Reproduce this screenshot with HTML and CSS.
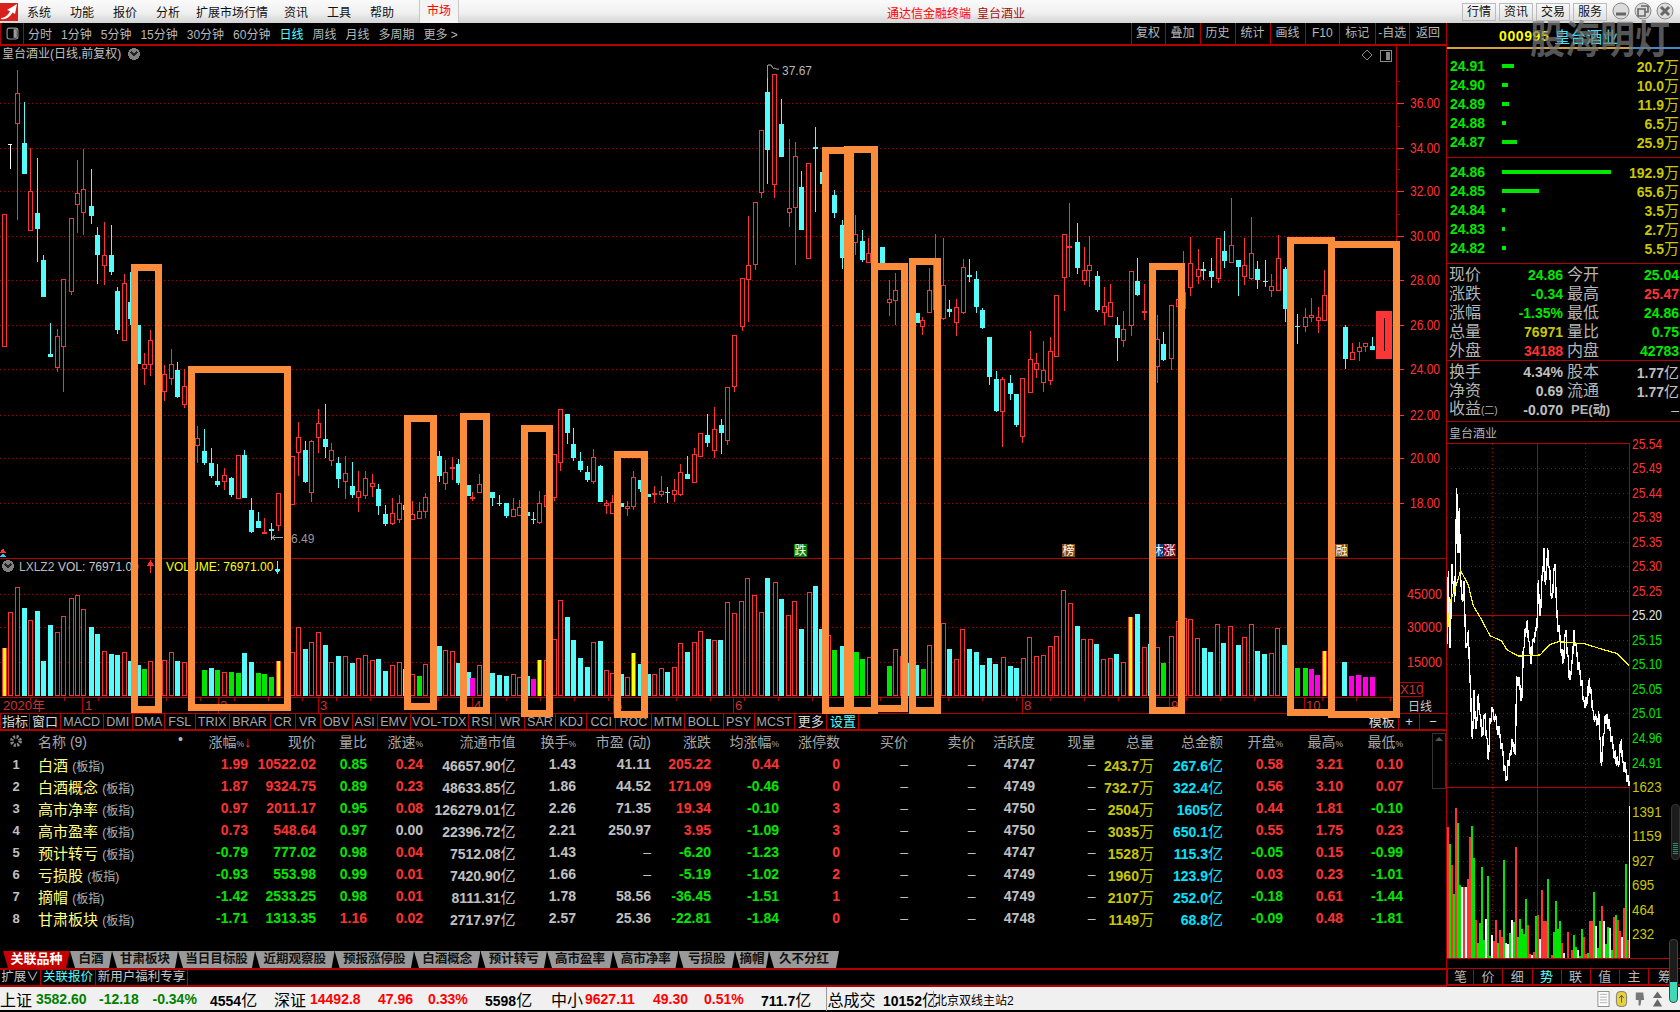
FILE: index.html
```html
<!DOCTYPE html>
<html lang="zh-CN">
<head>
<meta charset="utf-8">
<title>通达信金融终端</title>
<link rel="stylesheet" href="styles.css">
</head>
<body>
<div class="app">
  <header class="menu">
    <svg class="logo" viewBox="0 0 18 18"><rect width="18" height="18" fill="#d8201c"/><path d="M1 15 C5 15 8 12 10 8 L7 7 L17 1 L15 11 L12.5 9.5 C10 14 6 17 1 16Z" fill="#fff"/></svg>
    <nav class="menu-items"><span>系统</span><span>功能</span><span>报价</span><span>分析</span><span class="wide">扩展市场行情</span><span>资讯</span><span>工具</span><span>帮助</span></nav>
    <span class="market">市场</span>
    <div class="app-title"><span class="t1">通达信金融终端</span><span class="t2">皇台酒业</span></div>
    <div class="top-btns"><span>行情</span><span>资讯</span><span>交易</span><span>服务</span></div>
    <div class="win-btns">
      <svg viewBox="0 0 18 18"><circle cx="9" cy="9" r="8"/><path d="M4 12h10" stroke-width="3"/></svg>
      <svg viewBox="0 0 18 18"><circle cx="9" cy="9" r="8"/><path d="M7 4h7v6h-3M4 7h7v7H4z" stroke-width="1.6"/></svg>
      <svg viewBox="0 0 18 18"><circle cx="9" cy="9" r="8"/><path d="M5 5l8 8M13 5l-8 8" stroke-width="3"/></svg>
    </div>
  </header>

  <div class="work">
    <section class="left">
      <div class="toolbar">
        <div class="tool-toggle"><svg viewBox="0 0 12 12"><rect x="1" y="1" width="10" height="10" rx="2"/><rect x="7" y="2" width="3" height="8" class="fill"/></svg></div>
        <div class="periods"><span>分时</span><span>1分钟</span><span>5分钟</span><span>15分钟</span><span>30分钟</span><span>60分钟</span><span class="on">日线</span><span>周线</span><span>月线</span><span>多周期</span><span>更多 &gt;</span></div>
        <div class="tools"><span>复权</span><span>叠加</span><span>历史</span><span>统计</span><span>画线</span><span>F10</span><span>标记</span><span>-自选</span><span>返回</span></div>
      </div>

      <svg id="kline" class="kline" viewBox="0 46 1446 667" width="1446" height="667"></svg>

      <div class="ind-tabs">
        <span class="hi">指标</span><span class="hi">窗口</span><span>MACD</span><span>DMI</span><span>DMA</span><span>FSL</span><span>TRIX</span><span>BRAR</span><span>CR</span><span>VR</span><span>OBV</span><span>ASI</span><span>EMV</span><span>VOL-TDX</span><span>RSI</span><span>WR</span><span>SAR</span><span>KDJ</span><span>CCI</span><span>ROC</span><span>MTM</span><span>BOLL</span><span>PSY</span><span>MCST</span><span class="hi">更多</span><span class="act">设置</span><i></i><span class="hi">模板</span><span class="hi">+</span><span class="hi">−</span>
      </div>

      <div class="sheet">
        <div class="row head">
          <span class="c"><svg class="gear" viewBox="0 0 14 14"><circle cx="7" cy="7" r="4.2"/></svg></span><span class="l">名称 (9)<b class="dot">•</b></span><span>涨幅<em>%</em><b class="sort">↓</b></span><span>现价</span><span>量比</span><span>涨速<em>%</em></span><span>流通市值</span><span>换手<em>%</em></span><span>市盈 (动)</span><span>涨跌</span><span>均涨幅<em>%</em></span><span>涨停数</span><span>买价</span><span>卖价</span><span>活跃度</span><span>现量</span><span>总量</span><span>总金额</span><span>开盘<em>%</em></span><span>最高<em>%</em></span><span>最低<em>%</em></span>
        </div>
        <div class="row">
          <span class="c">1</span><span class="l nm">白酒 <small>(板指)</small></span><span class="r">1.99</span><span class="r">10522.02</span><span class="g">0.85</span><span class="r">0.24</span><span>46657.90<u>亿</u></span><span>1.43</span><span>41.11</span><span class="r">205.22</span><span class="r">0.44</span><span class="r">0</span><span class="n">–</span><span class="n">–</span><span>4747</span><span class="n">–</span><span class="y">243.7<u>万</u></span><span class="b">267.6<u>亿</u></span><span class="r">0.58</span><span class="r">3.21</span><span class="r">0.10</span>
        </div>
        <div class="row">
          <span class="c">2</span><span class="l nm">白酒概念 <small>(板指)</small></span><span class="r">1.87</span><span class="r">9324.75</span><span class="g">0.89</span><span class="r">0.23</span><span>48633.85<u>亿</u></span><span>1.86</span><span>44.52</span><span class="r">171.09</span><span class="g">-0.46</span><span class="r">0</span><span class="n">–</span><span class="n">–</span><span>4749</span><span class="n">–</span><span class="y">732.7<u>万</u></span><span class="b">322.4<u>亿</u></span><span class="r">0.56</span><span class="r">3.10</span><span class="r">0.07</span>
        </div>
        <div class="row">
          <span class="c">3</span><span class="l nm">高市净率 <small>(板指)</small></span><span class="r">0.97</span><span class="r">2011.17</span><span class="g">0.95</span><span class="r">0.08</span><span>126279.01<u>亿</u></span><span>2.26</span><span>71.35</span><span class="r">19.34</span><span class="g">-0.10</span><span class="r">3</span><span class="n">–</span><span class="n">–</span><span>4750</span><span class="n">–</span><span class="y">2504<u>万</u></span><span class="b">1605<u>亿</u></span><span class="r">0.44</span><span class="r">1.81</span><span class="g">-0.10</span>
        </div>
        <div class="row">
          <span class="c">4</span><span class="l nm">高市盈率 <small>(板指)</small></span><span class="r">0.73</span><span class="r">548.64</span><span class="g">0.97</span><span>0.00</span><span>22396.72<u>亿</u></span><span>2.21</span><span>250.97</span><span class="r">3.95</span><span class="g">-1.09</span><span class="r">3</span><span class="n">–</span><span class="n">–</span><span>4750</span><span class="n">–</span><span class="y">3035<u>万</u></span><span class="b">650.1<u>亿</u></span><span class="r">0.55</span><span class="r">1.75</span><span class="r">0.23</span>
        </div>
        <div class="row">
          <span class="c">5</span><span class="l nm">预计转亏 <small>(板指)</small></span><span class="g">-0.79</span><span class="g">777.02</span><span class="g">0.98</span><span class="r">0.04</span><span>7512.08<u>亿</u></span><span>1.43</span><span class="n">–</span><span class="g">-6.20</span><span class="g">-1.23</span><span class="r">0</span><span class="n">–</span><span class="n">–</span><span>4747</span><span class="n">–</span><span class="y">1528<u>万</u></span><span class="b">115.3<u>亿</u></span><span class="g">-0.05</span><span class="r">0.15</span><span class="g">-0.99</span>
        </div>
        <div class="row">
          <span class="c">6</span><span class="l nm">亏损股 <small>(板指)</small></span><span class="g">-0.93</span><span class="g">553.98</span><span class="g">0.99</span><span class="r">0.01</span><span>7420.90<u>亿</u></span><span>1.66</span><span class="n">–</span><span class="g">-5.19</span><span class="g">-1.02</span><span class="r">2</span><span class="n">–</span><span class="n">–</span><span>4749</span><span class="n">–</span><span class="y">1960<u>万</u></span><span class="b">123.9<u>亿</u></span><span class="r">0.03</span><span class="r">0.23</span><span class="g">-1.01</span>
        </div>
        <div class="row">
          <span class="c">7</span><span class="l nm">摘帽 <small>(板指)</small></span><span class="g">-1.42</span><span class="g">2533.25</span><span class="g">0.98</span><span class="r">0.01</span><span>8111.31<u>亿</u></span><span>1.78</span><span>58.56</span><span class="g">-36.45</span><span class="g">-1.51</span><span class="r">1</span><span class="n">–</span><span class="n">–</span><span>4749</span><span class="n">–</span><span class="y">2107<u>万</u></span><span class="b">252.0<u>亿</u></span><span class="g">-0.18</span><span class="r">0.61</span><span class="g">-1.44</span>
        </div>
        <div class="row">
          <span class="c">8</span><span class="l nm">甘肃板块 <small>(板指)</small></span><span class="g">-1.71</span><span class="g">1313.35</span><span class="r">1.16</span><span class="r">0.02</span><span>2717.97<u>亿</u></span><span>2.57</span><span>25.36</span><span class="g">-22.81</span><span class="g">-1.84</span><span class="r">0</span><span class="n">–</span><span class="n">–</span><span>4748</span><span class="n">–</span><span class="y">1149<u>万</u></span><span class="b">68.8<u>亿</u></span><span class="g">-0.09</span><span class="r">0.48</span><span class="g">-1.81</span>
        </div>
        <div class="sheet-scroll"><b></b></div>
      </div>

      <div class="sheet-tabs">
        <span class="act">关联品种</span><span>白酒</span><span>甘肃板块</span><span>当日目标股</span><span>近期观察股</span><span>预报涨停股</span><span>白酒概念</span><span>预计转亏</span><span>高市盈率</span><span>高市净率</span><span>亏损股</span><span>摘帽</span><span>久不分红</span>
      </div>
      <div class="sub-tabs"><span>扩展∨</span><span class="on">关联报价</span><span>新用户福利专享</span></div>
    </section>

    <aside class="panel">
      <div class="p-head"><span class="code">000995</span><span class="pname">皇台酒业</span></div>
      <div class="book sell">
        <div class="lv"><b>24.91</b><i><em style="width:12px"></em></i><span>20.7<u>万</u></span></div>
        <div class="lv"><b>24.90</b><i><em style="width:6px"></em></i><span>10.0<u>万</u></span></div>
        <div class="lv"><b>24.89</b><i><em style="width:7px"></em></i><span>11.9<u>万</u></span></div>
        <div class="lv"><b>24.88</b><i><em style="width:4px"></em></i><span>6.5<u>万</u></span></div>
        <div class="lv"><b>24.87</b><i><em style="width:15px"></em></i><span>25.9<u>万</u></span></div>
      </div>
      <div class="book buy">
        <div class="lv"><b>24.86</b><i><em style="width:109px"></em></i><span>192.9<u>万</u></span></div>
        <div class="lv"><b>24.85</b><i><em style="width:37px"></em></i><span>65.6<u>万</u></span></div>
        <div class="lv"><b>24.84</b><i><em style="width:3px"></em></i><span>3.5<u>万</u></span></div>
        <div class="lv"><b>24.83</b><i><em style="width:3px"></em></i><span>2.7<u>万</u></span></div>
        <div class="lv"><b>24.82</b><i><em style="width:4px"></em></i><span>5.5<u>万</u></span></div>
      </div>
      <div class="quote">
        <div class="qr"><label>现价</label><b class="g">24.86</b><label>今开</label><b class="g">25.04</b></div>
        <div class="qr"><label>涨跌</label><b class="g">-0.34</b><label>最高</label><b class="r">25.47</b></div>
        <div class="qr"><label>涨幅</label><b class="g">-1.35%</b><label>最低</label><b class="g">24.86</b></div>
        <div class="qr"><label>总量</label><b class="y">76971</b><label>量比</label><b class="g">0.75</b></div>
        <div class="qr"><label>外盘</label><b class="r">34188</b><label>内盘</label><b class="g">42783</b></div>
      </div>
      <div class="quote extra">
        <div class="qr"><label>换手</label><b>4.34%</b><label>股本</label><b>1.77<u>亿</u></b></div>
        <div class="qr"><label>净资</label><b>0.69</b><label>流通</label><b>1.77<u>亿</u></b></div>
        <div class="qr"><label class="wide">收益<small>(二)</small></label><b>-0.070</b><label class="pe">PE(动)</label><b class="dash">–</b></div>
      </div>
      <div class="p-title">皇台酒业</div>
      <svg id="fs" class="fs" viewBox="1447 443 233 525" width="233" height="525"></svg>
      <div class="r-tabs"><span>笔</span><span>价</span><span>细</span><span class="on">势</span><span>联</span><span>值</span><span>主</span><span>筹</span></div>
    </aside>
  </div>

  <footer class="status">
    <span>上证</span><b class="dg">3582.60</b><b class="dg">-12.18</b><b class="dg">-0.34%</b><b class="k">4554<u>亿</u></b>
    <span>深证</span><b class="rd">14492.8</b><b class="rd">47.96</b><b class="rd">0.33%</b><b class="k">5598<u>亿</u></b>
    <span>中小</span><b class="rd">9627.11</b><b class="rd">49.30</b><b class="rd">0.51%</b><b class="k">711.7<u>亿</u></b>
    <span class="sep">总成交</span><b class="k">10152<u>亿</u></b><span class="srv">北京双线主站2</span>
    <div class="st-icons">
      <svg viewBox="0 0 14 18"><rect x="1" y="1" width="12" height="16" fill="#fff" stroke="#888"/><path d="M3 4h8M3 7h8M3 10h8M3 13h8" stroke="#aaa"/></svg>
      <svg viewBox="0 0 14 18"><rect x="1.500" y="1" width="11" height="16" rx="4" fill="#e6d23c" stroke="#777"/><path d="M7 5v8M4.500 8L7 5l2.500 3" stroke="#555" fill="none"/></svg>
      <svg viewBox="0 0 14 18"><path d="M3 2h8l1 8H9l-1 6H6V10H3z" fill="#777"/></svg>
      <svg viewBox="0 0 14 18"><path d="M7 1l5 7H2zM7 9l5 8H2z" fill="#666"/></svg>
    </div>
  </footer>

  <div class="marks" aria-hidden="true">
    <svg id="boxes" class="boxes" viewBox="0 0 1680 1012" width="1680" height="1012"></svg>
    <div class="watermark">股海明灯</div>
    <div class="dock dock-a"><i></i></div>
    <div class="dock dock-b"><i></i></div>
  </div>
</div>
<script src="chart.js"></script>
</body>
</html>
```
FILE: styles.css
```css
* { box-sizing: border-box; margin: 0; padding: 0; }
html, body { width: 1680px; height: 1012px; background: #000; overflow: hidden; }
body { font-family: "Liberation Sans", "Noto Sans CJK SC", sans-serif; font-size: 12px; color: #c0c0c0; }
i, em, u { font-style: normal; text-decoration: none; }
.app { position: relative; width: 1680px; height: 1012px; display: flex; flex-direction: column; padding-bottom: 2px; }

/* title bar */
.menu { height: 23px; flex: none; display: flex; align-items: center; position: relative; background: linear-gradient(#fafafa, #f0f0f0 55%, #d4d4d4); color: #111; font-size: 12px; }
.logo { width: 18px; height: 18px; flex: none; }
.menu-items { display: flex; gap: 19px; margin-left: 9px; }
.menu-items .wide { margin: 0 -3px; }
.market { margin-left: 25px; width: 40px; height: 23px; line-height: 22px; text-align: center; color: #f00; border: solid #c8c8c8; border-width: 0 1px; background: #f4f4f4; }
.app-title { position: absolute; left: 887px; top: 4px; display: flex; gap: 6px; }
.t1 { color: #f00; } .t2 { color: #a01010; }
.top-btns { position: absolute; left: 1462px; top: 3px; display: flex; gap: 3px; }
.top-btns span { width: 34px; height: 18px; line-height: 16px; text-align: center; border: 1px solid #bbb; background: linear-gradient(#f8f8f8, #e0e0e0); }
.win-btns { position: absolute; left: 1612px; top: 2px; display: flex; gap: 4px; }
.win-btns svg { width: 18px; height: 18px; }
.win-btns circle { fill: #dcdcdc; stroke: #888; }
.win-btns path { stroke: #666; fill: none; }

/* work area */
.work { flex: 1; min-height: 0; display: grid; grid-template-columns: 1446px 234px; }
.left { display: flex; flex-direction: column; min-width: 0; }

.toolbar { height: 23px; flex: none; display: flex; align-items: center; border-bottom: 2px solid #b40000; }
.tool-toggle { width: 24px; height: 21px; flex: none; display: flex; align-items: center; justify-content: center; border-left: 1px solid #b40000; border-right: 1px solid #b40000; }
.tool-toggle svg { width: 13px; height: 13px; }
.tool-toggle rect { fill: none; stroke: #9a9a9a; }
.tool-toggle rect.fill { fill: #9a9a9a; stroke: none; }
.periods { display: flex; gap: 9px; margin-left: 4px; color: #b8b8b8; white-space: nowrap; }
.periods .on { color: #5ff; }
.tools { margin-left: auto; display: grid; grid-template-columns: 34px 35px 35px 35px 35px 34.500px 35.500px 34.500px 37px; height: 21px; }
.tools span { border-left: 1px solid #b40000; text-align: center; line-height: 20px; color: #b8b8b8; white-space: nowrap; }

.kline { display: block; flex: none; shape-rendering: crispEdges; }
.kline text, .fs text { font-family: "Liberation Sans", "Noto Sans CJK SC", sans-serif; }

.ind-tabs { height: 18px; flex: none; display: grid; grid-template-columns: 30px 31px 42.500px 29.500px 32px 30.500px 34px 41px 25.500px 24.500px 32.200px 25px 33px 58px 27.700px 28.600px 31px 31.500px 28.500px 36px 33px 38.600px 31.100px 40.300px 32.400px 32.100px 505.500px 34.400px 20.600px 26px; border-top: 1px solid #b40000; border-bottom: 2px solid #b40000; font-size: 12.500px; color: #a8a8a8; }
.ind-tabs span { border-right: 1px solid #b40000; text-align: center; line-height: 16px; white-space: nowrap; overflow: hidden; }
.ind-tabs .hi { color: #d8d8d8; font-size: 13px; }
.ind-tabs .act { color: #5ff; font-size: 13px; }
.ind-tabs > span:first-child { border-left: 1px solid #b40000; }
.ind-tabs > span:last-child { border-right: 0; }

/* quotes table */
.sheet { position: relative; height: 220px; flex: none; }
.row { display: grid; grid-template-columns: 32px 158px 58px 68px 51px 56px 92.600px 60.400px 75px 60px 68px 61px 68px 67.600px 59.400px 60.500px 58.500px 69px 60px 60px 60px; height: 22px; align-items: center; font-size: 14px; font-weight: 700; color: #c0c0c0; white-space: nowrap; }
.row > span { text-align: right; }
.row.head { height: 20px; margin-bottom: 2px; font-weight: 400; font-size: 14px; color: #a8a8a8; }
.head em { font-size: 8.500px; }
.row > .c { text-align: center; font-size: 13px; }
.row > .l { text-align: left; padding-left: 6px; position: relative; }
.head .l { font-size: 14px; }
.dot { position: absolute; left: 146px; top: 0; font-weight: 400; color: #bbb; }
.sort { display: inline-block; width: 4px; font-size: 15px; line-height: 14px; color: #f33; font-weight: 400; overflow: visible; }
.gear { width: 14px; height: 14px; vertical-align: -2px; }
.gear circle { fill: none; stroke: #888; stroke-width: 3.500; stroke-dasharray: 2 1.300; }
.row .nm { font-size: 15px; font-weight: 400; color: #ffff80; }
.row small { font-size: 12px; color: #b0b0b0; }
.row u { font-weight: 400; font-size: 15px; }
.r { color: #ff3232; } .g { color: #00e800; } .y { color: #c8c800; } .b { color: #00e4ff; }
.row > .n { font-weight: 400; color: #c0c0c0; }
.sheet-scroll { position: absolute; left: 1432px; top: 2px; width: 14px; height: 56px; border: 1px solid #333; }
.sheet-scroll b { display: block; margin: 3px auto 0; width: 0; height: 0; border: 4px solid transparent; border-top: 0; border-bottom-color: #555; }

.sheet-tabs { height: 17px; flex: none; display: grid; grid-template-columns: 3px 67px 42px 66px 77px 79.600px 79.400px 66.500px 66.500px 66px 65.500px 56.500px 34px 70px; grid-auto-flow: column; align-items: stretch; font-size: 12.500px; font-weight: 700; color: #111; white-space: nowrap; }
.sheet-tabs::before { content: ""; }
.sheet-tabs span { background: #999; text-align: center; line-height: 16px; clip-path: polygon(0 0, 100% 0, calc(100% - 3px) 100%, 5px 100%); }
.sheet-tabs .act { background: #c40000; color: #fff; font-size: 13px; clip-path: polygon(0 0, 100% 0, calc(100% - 4px) 100%, 5px 100%); }

.sub-tabs { height: 19px; flex: none; display: grid; grid-template-columns: 41px 55px 92px 1fr; border-top: 2px solid #b40000; border-bottom: 2px solid #b40000; font-size: 12.500px; color: #c8c8c8; }
.sub-tabs span { border-right: 1px solid #b40000; text-align: center; line-height: 15px; white-space: nowrap; overflow: hidden; }
.sub-tabs .on { color: #5ff; }

/* right panel */
.panel { border-left: 1px solid #b40000; display: flex; flex-direction: column; min-width: 0; height: 964px; }
.p-head { height: 26px; flex: none; padding: 2px 0 0 52px; display: flex; gap: 5px; align-items: center; font-size: 16px; border-bottom: 2px solid; border-image: linear-gradient(90deg, #d4a23c 0 79%, #3c8ccc 79% 100%) 1; }
.code { color: #ff0; font-weight: 700; font-size: 14px; letter-spacing: .6px; }
.pname { color: #3fe6ff; }
.book { flex: none; border-bottom: 1px solid #b40000; }
.sell { height: 109px; padding-top: 6px; }
.buy { height: 106px; padding-top: 3px; }
.lv { height: 19px; display: grid; grid-template-columns: 52px 1fr auto; align-items: center; padding: 0 1px 0 3px; }
.lv b { font-size: 14px; color: #00e800; }
.lv i { display: block; }
.lv em { display: block; height: 4px; background: #00e800; }
.lv span { font-size: 14px; font-weight: 700; color: #c8c800; white-space: nowrap; }
.lv u, .qr u { font-size: 15px; font-weight: 400; }
.quote { flex: none; height: 97px; padding-top: 1px; border-bottom: 1px solid #b40000; }
.quote.extra { height: 61px; padding-top: 0; }
.qr { height: 19px; display: grid; grid-template-columns: 36px 78px 40px 1fr; align-items: center; padding: 0 1px 0 2px; white-space: nowrap; }
.qr label { font-size: 16px; color: #b4b4b4; line-height: 19px; }
.qr label:nth-of-type(2) { padding-left: 4px; }
.qr b { text-align: right; font-size: 14px; color: #c0c0c0; }
.qr b.g { color: #00e800; } .qr b.r { color: #ff3232; } .qr b.y { color: #c8c800; }
.qr .wide small { font-size: 10px; }
.qr .pe { font-size: 13px; font-weight: 700; padding-left: 0; margin-left: 4px; }
.qr .dash { font-weight: 400; }
.p-title { height: 21px; flex: none; font-size: 12px; line-height: 24px; padding-left: 2px; color: #b4b4b4; }
.fs { display: block; flex: none; overflow: visible; shape-rendering: crispEdges; }
.r-tabs { height: 18px; flex: none; display: grid; grid-template-columns: 26px 29px 29.500px 29px 29px 29.500px 29px 1fr; border-top: 1px solid #b40000; border-bottom: 2px solid #b40000; font-size: 13px; color: #b8b8b8; }
.r-tabs span { border-left: 1px solid #b40000; text-align: center; line-height: 15px; }
.r-tabs .on { color: #5ff; }

/* status bar */
.status { height: 23px; flex: none; display: grid; grid-template-columns: 36px 63px 53.500px 57.500px 64px 36px 68px 50px 57px 66px 34px 68px 51px 57px 64.500px 57.500px 55px 100px 1fr; align-items: center; background: #f0f0f0; color: #000; font-size: 16px; white-space: nowrap; }
.status b { font-size: 14px; }
.status u { font-size: 16px; font-weight: 400; }
.dg { color: #008000; } .rd { color: #f00; } .k { color: #000; }
.sep { border-left: 1px solid #999; padding-left: 1px; }
.srv { font-size: 12px; border-left: 1px solid #999; padding-left: 1px; margin-left: -5px; }
.st-icons { display: flex; justify-content: flex-end; gap: 5px; padding-right: 16px; }
.st-icons svg { width: 13px; height: 18px; }

/* things lying over the screen */
.marks { position: absolute; inset: 0; pointer-events: none; }
.boxes { position: absolute; left: 0; top: 0; shape-rendering: crispEdges; }
.boxes rect { fill: none; stroke: #fa8c3c; stroke-width: 7; }
.watermark { position: absolute; left: 1530px; top: 15px; font: 700 35px/42px "Noto Sans CJK SC", sans-serif; color: rgba(120, 120, 120, .72); transform: scaleY(1.1); }
.dock { position: absolute; background: #1c1c1c; border-radius: 4px; }
.dock-a { left: 1671px; top: 804px; width: 9px; height: 56px; border: 1px solid #333; }
.dock-a i { position: absolute; left: 1px; right: 1px; bottom: 4px; height: 12px; background: repeating-linear-gradient(#2a8a70 0 1px, #1c1c1c 1px 2px); }
.dock-b { left: 1669px; top: 939px; width: 9px; height: 64px; border: 1px solid #444; border-radius: 4px 4px 5px 5px; overflow: hidden; }
.dock-b i { position: absolute; left: 0; right: 0; bottom: 0; height: 20px; background: #3fd8b8; }
```
FILE: chart.js
```javascript
(function () {
  var NS = 'http://www.w3.org/2000/svg';
  var RED = '#ff3232', CY = '#54fcfc', GRN = '#00e600', DARK = '#a80000', LINE = '#b40000';

  function el(parent, tag, attrs, text) {
    var n = document.createElementNS(NS, tag);
    for (var k in attrs) n.setAttribute(k, attrs[k]);
    if (text != null) n.textContent = text;
    parent.appendChild(n);
    return n;
  }
  function rect(p, x, y, w, h, fill, stroke) {
    return el(p, 'rect', { x: x, y: y, width: w, height: h, fill: fill || 'none', stroke: stroke || 'none' });
  }
  function line(p, x1, y1, x2, y2, c, dash) {
    var a = { x1: x1, y1: y1, x2: x2, y2: y2, stroke: c };
    if (dash) a['stroke-dasharray'] = dash;
    return el(p, 'line', a);
  }
  function label(p, x, y, s, fill, size, len) {
    var a = { x: x, y: y, fill: fill, 'font-size': size };
    if (len) { a.textLength = len; a.lengthAdjust = 'spacingAndGlyphs'; }
    return el(p, 'text', a, s);
  }

  /* daily candles, as [x, high, top, bottom, low, kind] in crop units */
  var A = [[8,493,493,892,892,'r'],[37,60,130,223,510,'r'],[53,155,280,372,372,'c'],[68,293,424,542,542,'r'],[82,325,490,537,635,'c'],[97,615,630,740,740,'c'],[113,820,912,920,920,'c'],[128,838,858,953,965,'r'],[142,688,688,892,1025,'r'],[158,503,503,725,735,'r'],[173,330,430,464,548,'r'],[187,297,418,490,555,'r'],[203,357,468,498,522,'c'],[218,531,555,615,702,'c'],[232,517,616,647,705,'r'],[248,525,615,666,675,'c'],[263,712,723,840,852,'c'],[278,672,700,872,872,'r'],[292,665,755,808,825,'c'],[310,825,825,942,942,'c'],[323,908,943,958,1005,'r'],[337,840,871,944,978,'r'],[368,945,973,1027,1053,'r'],[384,897,943,988,1005,'r'],[397,937,960,1042,1045,'c'],[413,958,1008,1065,1075,'r'],[442,1128,1165,1187,1240,'r'],[458,1137,1203,1240,1245,'c'],[473,1194,1240,1278,1283,'c'],[487,1243,1293,1305,1310,'c'],[502,1255,1276,1295,1320,'r'],[518,1280,1284,1335,1340,'c'],[534,1216,1216,1346,1346,'r'],[547,1200,1215,1343,1343,'c'],[563,1343,1380,1445,1450,'c'],[578,1385,1413,1433,1435,'c'],[592,1403,1446,1450,1450,'s'],[608,1418,1438,1443,1470,'c'],[623,1330,1330,1427,1442,'r'],[640,1343,1343,1360,1360,'r'],[654,1218,1218,1366,1366,'r'],[668,1117,1162,1210,1278,'r'],[684,1172,1200,1296,1298,'c'],[697,1170,1172,1328,1355,'r'],[713,1078,1120,1163,1210,'r'],[729,1062,1167,1190,1225,'c'],[742,1180,1200,1232,1248,'r'],[758,1220,1240,1286,1315,'c'],[773,1218,1270,1295,1347,'r'],[789,1236,1308,1335,1344,'c'],[803,1263,1323,1343,1385,'r'],[818,1263,1285,1337,1346,'r'],[834,1272,1298,1310,1340,'r'],[847,1302,1318,1367,1395,'c'],[863,1365,1392,1422,1428,'c'],[878,1345,1390,1421,1425,'r'],[893,1335,1360,1411,1420,'r'],[908,1350,1365,1380,1395,'c'],[923,1353,1393,1409,1409,'r'],[938,1355,1384,1406,1406,'r'],[953,1330,1340,1385,1405,'r'],[984,1203,1218,1277,1295,'c'],[997,1230,1267,1301,1320,'r'],[1012,1222,1252,1258,1290,'r'],[1027,1228,1242,1298,1305,'c'],[1048,1305,1305,1337,1337,'c'],[1058,1327,1340,1345,1352,'r'],[1073,1272,1303,1330,1330,'r'],[1103,1326,1326,1343,1368,'c'],[1118,1335,1360,1362,1367,'c'],[1134,1358,1358,1398,1404,'c'],[1150,1345,1378,1400,1400,'r'],[1163,1350,1372,1397,1397,'r'],[1180,1385,1385,1397,1397,'c'],[1195,1385,1407,1409,1423,'c'],[1208,1323,1360,1418,1423,'r'],[1224,1335,1335,1372,1372,'r'],[1240,1213,1213,1345,1352,'r'],[1255,1078,1078,1238,1262,'r'],[1269,1092,1092,1148,1182,'c'],[1284,1133,1183,1225,1232,'c'],[1300,1207,1233,1260,1265,'c'],[1314,1247,1266,1290,1295,'c'],[1329,1197,1222,1297,1302,'r'],[1345,1245,1248,1355,1355,'c'],[1358,1350,1360,1367,1392,'r'],[1372,1335,1357,1392,1392,'r'],[1392,1358,1358,1370,1370,'c'],[1405,1353,1367,1378,1397,'r'],[1419,1264,1282,1372,1380,'r'],[1434,1290,1290,1318,1326,'c'],[1452,1332,1332,1340,1340,'c'],[1464,1308,1330,1335,1360,'s'],[1480,1278,1322,1336,1342,'r'],[1495,1312,1327,1329,1358,'c'],[1510,1288,1321,1336,1356,'r'],[1524,1243,1267,1336,1338,'r'],[1540,1218,1272,1286,1288,'c'],[1555,1194,1213,1300,1300,'r'],[1567,1150,1150,1222,1222,'r']];
  var B = [[15,1092,1155,1178,1190,'c'],[30,1072,1138,1202,1225,'r'],[43,1108,1125,1148,1212,'c'],[57,1010,1010,1174,1185,'r'],[72,855,855,1012,1025,'r'],[87,685,685,830,843,'r'],[100,498,646,690,815,'r'],[114,455,455,646,660,'r'],[128,240,240,430,443,'r'],[141,80,126,300,402,'c'],[155,72,72,406,443,'r'],[170,147,222,320,320,'c'],[185,267,475,490,530,'r'],[198,276,319,475,645,'r'],[212,363,411,540,540,'c'],[226,340,340,626,626,'r'],[240,232,291,297,487,'c'],[254,290,366,402,450,'c'],[281,420,435,488,503,'c'],[296,510,526,623,656,'c'],[324,495,553,580,615,'r'],[338,540,573,630,637,'c'],[352,565,610,638,640,'r'],[380,590,590,640,640,'c'],[395,690,748,758,798,'r'],[408,668,721,754,826,'r'],[425,710,710,750,795,'c'],[453,788,788,818,818,'c'],[465,800,811,832,855,'r'],[478,655,721,790,790,'r'],[492,552,640,780,780,'r'],[507,565,706,808,810,'r'],[521,750,778,785,800,'c'],[534,746,772,818,858,'r'],[549,628,652,790,793,'r'],[563,628,676,681,695,'c'],[576,663,688,770,790,'c'],[590,773,780,834,838,'c'],[605,862,862,980,1005,'c'],[618,962,987,1082,1085,'c'],[632,980,988,1087,1190,'r'],[647,975,999,1032,1050,'c'],[661,1032,1032,1125,1130,'c'],[674,985,985,1160,1178,'r'],[689,843,928,1028,1028,'r'],[703,908,940,960,985,'r'],[716,872,960,1000,1026,'r'],[731,862,902,992,1005,'r'],[745,736,736,922,922,'r'],[760,553,553,683,783,'r'],[772,460,588,593,680,'s'],[787,520,576,653,672,'c'],[802,590,660,692,705,'r'],[814,558,644,662,710,'r'],[829,663,678,780,785,'c'],[844,710,767,790,825,'r'],[856,702,755,800,800,'r'],[871,802,825,864,932,'c'],[885,783,838,872,890,'r'],[900,663,663,827,858,'r'],[913,625,693,736,738,'c'],[927,702,782,790,810,'r'],[945,795,795,850,850,'c'],[956,795,868,952,1000,'r'],[968,847,882,930,933,'c'],[984,766,766,926,960,'r'],[998,726,746,770,780,'r'],[1010,603,725,778,778,'r'],[1025,562,640,715,737,'r'],[1040,598,658,680,702,'r'],[1052,636,657,662,690,'c'],[1067,625,663,680,713,'c'],[1082,565,565,686,698,'r'],[1095,543,604,632,654,'c'],[1109,445,586,638,640,'r'],[1124,630,630,650,738,'c'],[1138,565,646,680,705,'r'],[1151,501,610,688,690,'r'],[1165,632,658,690,718,'c'],[1180,630,693,696,710,'c'],[1193,672,708,722,740,'r'],[1208,555,625,722,722,'r'],[1222,650,658,776,816,'c'],[1248,792,828,830,882,'c'],[1264,773,802,830,845,'r'],[1278,743,796,805,815,'r'],[1291,772,802,812,848,'r'],[1305,660,736,812,812,'r'],[1348,825,831,926,958,'c'],[1362,880,907,930,930,'r'],[1377,875,892,907,932,'r'],[1389,880,880,892,905,'r'],[1404,860,888,900,900,'c']];

  /* volume bars, as [x, top, kind] in crop units */
  var VA = [[8,324,'y'],[23,217,'r'],[37,142,'r'],[53,204,'c'],[68,241,'r'],[82,213,'c'],[97,363,'c'],[113,255,'c'],[128,277,'r'],[142,229,'r'],[158,175,'r'],[173,166,'r'],[187,208,'r'],[203,261,'c'],[218,282,'c'],[232,334,'r'],[248,343,'c'],[263,345,'c'],[278,337,'r'],[292,363,'c'],[310,375,'c'],[323,387,'g'],[337,364,'r'],[368,361,'r'],[384,337,'r'],[397,363,'c'],[413,365,'r'],[428,365,'r'],[458,390,'g'],[473,384,'c'],[487,390,'g'],[502,395,'r'],[518,396,'g'],[534,399,'g'],[547,339,'c'],[563,366,'c'],[578,399,'g'],[592,402,'g'],[608,411,'g'],[623,363,'y'],[640,337,'r'],[654,337,'r'],[668,262,'r'],[684,327,'c'],[697,307,'r'],[713,277,'r'],[729,315,'c'],[742,366,'r'],[758,348,'c'],[773,348,'r'],[789,369,'c'],[803,355,'r'],[818,346,'r'],[834,361,'r'],[847,357,'c'],[863,393,'c'],[878,376,'r'],[893,366,'r'],[908,387,'c'],[923,403,'r'],[938,408,'g'],[953,373,'r'],[984,318,'c'],[997,330,'r'],[1012,334,'r'],[1027,369,'c'],[1048,396,'c'],[1058,414,'m'],[1073,376,'r'],[1103,399,'c'],[1118,405,'c'],[1134,408,'c'],[1150,403,'r'],[1163,412,'r'],[1180,408,'c'],[1195,417,'m'],[1208,360,'y'],[1224,360,'r'],[1240,297,'r'],[1255,181,'r'],[1269,231,'c'],[1284,300,'c'],[1300,354,'c'],[1314,381,'c'],[1329,307,'r'],[1345,303,'c'],[1358,391,'r'],[1372,400,'r'],[1392,402,'c'],[1405,412,'r'],[1419,339,'y'],[1434,372,'c'],[1452,402,'c'],[1464,403,'r'],[1480,385,'r'],[1495,396,'c'],[1510,381,'r'],[1524,310,'r'],[1540,336,'c'],[1555,307,'r'],[1567,274,'r']];
  var VB = [[16,297,'c'],[30,300,'r'],[43,300,'c'],[58,187,'r'],[72,220,'r'],[87,183,'r'],[100,114,'r'],[115,165,'r'],[130,216,'r'],[143,114,'c'],[158,127,'r'],[172,177,'c'],[187,225,'r'],[200,183,'r'],[215,267,'c'],[230,156,'r'],[243,138,'c'],[257,267,'c'],[272,285,'r'],[285,330,'g'],[300,318,'c'],[330,336,'g'],[343,357,'g'],[358,351,'r'],[400,378,'g'],[414,327,'r'],[428,348,'r'],[443,369,'c'],[458,375,'c'],[472,387,'g'],[485,315,'r'],[500,261,'r'],[514,249,'r'],[528,327,'c'],[542,357,'r'],[556,267,'r'],[571,327,'c'],[584,336,'c'],[598,375,'c'],[613,354,'c'],[626,372,'c'],[641,351,'r'],[656,378,'c'],[670,384,'c'],[684,354,'r'],[698,291,'r'],[713,348,'r'],[726,345,'r'],[741,318,'r'],[755,288,'r'],[770,150,'r'],[783,189,'r'],[798,258,'c'],[812,297,'r'],[826,297,'r'],[840,312,'c'],[855,357,'r'],[868,354,'r'],[882,342,'c'],[897,366,'r'],[912,231,'y'],[925,222,'c'],[940,321,'r'],[954,312,'c'],[968,321,'r'],[982,369,'g'],[997,288,'r'],[1012,243,'r'],[1025,234,'r'],[1039,237,'r'],[1054,294,'r'],[1067,324,'c'],[1081,336,'c'],[1096,252,'r'],[1109,309,'c'],[1124,258,'r'],[1139,315,'c'],[1153,291,'r'],[1167,252,'r'],[1181,333,'c'],[1195,342,'c'],[1209,339,'r'],[1223,264,'r'],[1238,315,'c'],[1266,384,'g'],[1281,384,'g'],[1295,387,'m'],[1308,405,'m'],[1323,333,'y'],[1365,366,'c'],[1380,408,'m'],[1395,405,'m'],[1409,411,'m'],[1423,411,'m']];

  var k = document.getElementById('kline');
  var priceRows = [[103, '36.00'], [148, '34.00'], [191, '32.00'], [236, '30.00'], [280, '28.00'], [325, '26.00'], [369, '24.00'], [415, '22.00'], [458, '20.00'], [503, '18.00']];
  priceRows.forEach(function (p) {
    line(k, 0, p[0] + .5, 1396, p[0] + .5, DARK, '1 3');
    line(k, 1396, p[0] + .5, 1404, p[0] + .5, RED);
    label(k, 1410, p[0] + 5, p[1], RED, 14, 30);
    line(k, 1396, p[0] - 21.5, 1400, p[0] - 21.5, LINE);
  });
  [[594, '45000'], [627, '30000'], [662, '15000']].forEach(function (p) {
    line(k, 0, p[0] + .5, 1396, p[0] + .5, DARK, '1 3');
    label(k, 1407, p[0] + 5, p[1], RED, 14, 35);
  });
  line(k, 1396.5, 46, 1396.5, 713, LINE);
  line(k, 0, 558.5, 1446, 558.5, LINE);
  line(k, 0, 697.5, 1396, 697.5, LINE);

  function candle(c, sx, x0) {
    var x = Math.round(x0 + c[0] / sx);
    var f = function (v) { return Math.round(v / 3 + 50); };
    var hi = f(c[1]), t = f(c[2]), b = f(c[3]), lo = f(c[4]);
    var up = c[5] !== 'c';
    var col = up ? RED : CY;
    line(k, x + .5, hi, x + .5, lo, col);
    if (c[5] === 'c') rect(k, x - 2, t, 5, Math.max(b - t, 1), CY);
    else if (c[5] === 's') rect(k, x - 2, t, 5, Math.max(b - t, 2), RED);
    else rect(k, x - 1.5, t + .5, 4, Math.max(b - t - 1, 1), '#000', RED);
  }
  A.forEach(function (c) { candle(c, 2.24, 0); });
  B.forEach(function (c) { candle(c, 2.09, 700); });

  rect(k, 10, 144, 1, 25, '#fff');
  rect(k, 8, 144, 4, 1, '#fff');
  /* the highlighted last bar */
  rect(k, 1376, 311, 16, 48, '#ff3434');
  rect(k, 1384, 318, 1, 33, '#200');

  function vol(v, sx, x0) {
    var x = Math.round(x0 + v[0] / sx), top = Math.round(v[1] / 3 + 540), h = 696 - top;
    var m = { c: CY, g: GRN, m: '#ff00e0', y: '#ffff00' };
    if (v[2] === 'r') rect(k, x - 1.5, top + .5, 4, h - 1, '#000', RED);
    else if (v[2] === 'c') rect(k, x - 2, top, 5, h, CY);
    else {
      rect(k, x - 2, top, 5, h, m[v[2]]);
      if (v[2] === 'y') { rect(k, x - 2, top, 1, h, RED); rect(k, x + 2, top, 1, h, RED); }
    }
  }
  VA.forEach(function (v) { vol(v, 2.24, 0); });
  VB.forEach(function (v) { vol(v, 2.119, 700); });

  [[3, '2020年', 0], [85, '1', 82], [220, '2', 218], [320, '3', 318], [474, '4', 472], [615, '5', 613], [735, '6', 733], [1024, '8', 1022], [1171, '9', 1169], [1306, '10', 1304]].forEach(function (d) {
    if (d[2]) line(k, d[2] + .5, 698, d[2] + .5, 713, LINE);
    label(k, d[0], 710, d[1], '#d03030', 13);
  });
  for (var tx = 30; tx < 1396; tx += 34) line(k, tx + .5, 698, tx + .5, 701, LINE);

  /* headings written over the chart */
  label(k, 2, 58, '皇台酒业(日线,前复权)', '#c0c0c0', 12);
  el(k, 'circle', { cx: 134, cy: 54, r: 6, fill: '#808080' });
  el(k, 'path', { d: 'M131 52l3 3 3-3', fill: 'none', stroke: '#222', 'stroke-width': 2 });
  el(k, 'path', { d: 'M1367 50l5 5-5 5-5-5z', fill: 'none', stroke: '#888', 'shape-rendering': 'auto' });
  rect(k, 1380.5, 50.5, 11, 11, 'none', '#888');
  rect(k, 1386, 52, 4, 8, '#888');
  label(k, 782, 75, '37.67', '#b8b8b8', 12);
  line(k, 767.5, 65, 767.5, 78, '#999');
  el(k, 'path', { d: 'M768 65h3l2 3M773 69c2-2 3 1 6 0', fill: 'none', stroke: '#b8b8b8', 'shape-rendering': 'auto' });
  label(k, 291, 543, '6.49', '#999', 12);
  line(k, 272, 537.5, 283, 537.5, '#aaa');
  el(k, 'path', { d: 'M275 535l-3 2.500 3 2.500', fill: 'none', stroke: '#aaa', 'shape-rendering': 'auto' });

  el(k, 'path', { d: 'M3 548l3 5H0z', fill: '#f33' });
  el(k, 'path', { d: 'M3 553l3 4H0z', fill: '#3cf' });
  el(k, 'circle', { cx: 8, cy: 566, r: 6, fill: '#808080' });
  el(k, 'path', { d: 'M5 564l3 3 3-3', fill: 'none', stroke: '#222', 'stroke-width': 2 });
  label(k, 19, 571, 'LXLZ2', '#b8b8b8', 12);
  label(k, 58, 571, 'VOL: 76971.00', '#c8c8c8', 12);
  el(k, 'path', { d: 'M150.500 561v12M148 565l2.500-4 2.500 4z', fill: RED, stroke: RED });
  label(k, 166, 571, 'VOLUME: 76971.00', '#ffff00', 12);
  el(k, 'path', { d: 'M277.500 561v12M275 569l2.500 4 2.500-4z', fill: CY, stroke: CY });

  [[794, '跌', '#008000'], [1062, '榜', '#8a4a00'], [1155, '材', '#103c80'], [1163, '涨', '#8a0000'], [1335, '融', '#8a4a00']].forEach(function (b) {
    rect(k, b[0], 544, 13, 13, b[2]);
    label(k, b[0] + .5, 555, b[1], '#fff', 12);
  });
  rect(k, 1398.5, 682.5, 24, 14, '#000', LINE);
  label(k, 1400, 694, 'X10', '#d03030', 13);
  label(k, 1408, 711, '日线', '#c8c8c8', 12);

  /* intraday chart */
  var s = document.getElementById('fs');
  var fx = function (x) { return x / 3 + 1440; };
  var fy = function (y) { return y / 2.851 + 420; };
  var Y0 = 443.5, STEP = 24.54;
  var pl = ['25.54', '25.49', '25.44', '25.39', '25.35', '25.30', '25.25', '25.20', '25.15', '25.10', '25.05', '25.01', '24.96', '24.91'];
  pl.forEach(function (t, i) {
    var y = Y0 + i * STEP, yy = Math.round(y) + .5;
    if (i && i !== 7) line(s, 1447, yy, 1629, yy, DARK, '1 3');
    label(s, 1632, y + 5, t, i < 7 ? RED : (i === 7 ? '#e0e0e0' : GRN), 14, 30);
  });
  var vl = ['1623', '1391', '1159', '927', '695', '464', '232'];
  vl.forEach(function (t, i) {
    var y = 787 + i * STEP, yy = Math.round(y) + .5;
    if (i) line(s, 1447, yy, 1629, yy, DARK, '1 3');
    label(s, 1632, y + 5, t, '#c8c800', 14, t.length * 7.4);
  });
  [1492.5, 1585.5].forEach(function (x) { line(s, x, 444, x, 958, DARK, '1 3'); });
  line(s, 1537.5, 444, 1537.5, 958, LINE);
  line(s, 1447, 443.5, 1629, 443.5, LINE);
  line(s, 1447, 615.5, 1629, 615.5, LINE);
  line(s, 1447, 787.5, 1629, 787.5, LINE);
  line(s, 1447, 958.5, 1680, 958.5, LINE);
  line(s, 1629.5, 443, 1629.5, 958, LINE);

  /* minute volume: a fixed sequence, no randomness from run to run */
  var seed = 7;
  function rnd() { seed = (seed * 16807) % 2147483647; return seed / 2147483647; }
  var spikes = [[24,1160,RED],[30,1210,GRN],[33,1270,RED],[40,1350,GRN],[50,1105,RED],[52,1150,GRN],[60,1325,GRN],[65,1330,'#fff'],[88,1190,RED],[97,1158,GRN],[100,1250,GRN],[125,1275,GRN],[145,1300,GRN],[193,1255,GRN],[228,1217,RED],[255,1365,GRN],[295,1410,RED],[308,1340,RED],[322,1310,GRN],[345,1370,GRN],[460,1345,GRN],[486,1385,RED],[525,1410,GRN],[550,1390,RED],[556,1085,GRN],[560,1265,GRN]];
  var hits = {};
  spikes.forEach(function (a) { hits[Math.floor((fx(a[0]) - 1447) / 2)] = a; });
  var cols = [RED, GRN, '#fff', GRN, RED];
  for (var i = 0; i < 91; i++) {
    var x = 1447 + i * 2;
    var base = x < 1475 ? 1400 - rnd() * 100 : 1535 - rnd() * 120;
    var c = cols[Math.floor(rnd() * 5)];
    var top = base;
    if (hits[i]) { top = hits[i][1]; c = hits[i][2]; }
    rect(s, x, fy(top), 2, 958 - fy(top), c);
  }
  rect(s, 1629, fy(1100), 1, 958 - fy(1100), '#fff');

  var ptsW = [[22,640],[25,430],[30,650],[36,410],[44,520],[50,195],[54,380],[58,250],[62,450],[68,520],[72,460],[78,650],[85,600],[92,780],[97,910],[102,770],[108,880],[115,780],[125,900],[135,840],[145,970],[150,850],[160,830],[170,870],[180,900],[190,960],[198,1027],[210,950],[218,915],[226,955],[230,730],[240,760],[245,800],[250,650],[262,570],[272,695],[280,625],[290,600],[295,455],[300,560],[312,365],[316,470],[323,365],[335,510],[345,410],[352,570],[360,620],[368,695],[378,600],[388,740],[395,700],[402,600],[412,680],[420,720],[432,800],[440,810],[448,740],[460,830],[470,870],[476,830],[484,985],[496,840],[510,880],[520,940],[535,985],[544,915],[550,980],[558,1000],[568,1045]];
  var dense = [];
  ptsW.forEach(function (p, i) {
    if (!i) { dense.push(p); return; }
    var q = ptsW[i - 1], n = Math.max(1, Math.round((p[0] - q[0]) / 3));
    for (var j = 1; j <= n; j++) {
      var t = j / n, jit = j === n ? 0 : (j % 2 ? 18 : -18);
      dense.push([q[0] + (p[0] - q[0]) * t, q[1] + (p[1] - q[1]) * t + jit]);
    }
  });
  function poly(p, stroke, w) {
    el(s, 'polyline', { points: p.map(function (a) { return fx(a[0]).toFixed(1) + ',' + fy(a[1]).toFixed(1); }).join(' '), fill: 'none', stroke: stroke, 'stroke-width': w, 'shape-rendering': 'crispEdges' });
  }
  poly(dense, '#fff', 1.4);
  poly([[22,610],[30,520],[45,480],[62,430],[85,470],[100,530],[125,570],[150,615],[185,630],[200,655],[235,673],[300,670],[330,640],[355,632],[435,638],[490,655],[530,665],[568,700]], '#ffff00', 1.2);

  /* orange marker rectangles: [left, top, right, bottom] outer edges */
  var o = document.getElementById('boxes');
  [[131,264,162,713],[188,366,291,711],[404,415,437,710],[460,413,490,714],[521,425,553,717],[614,451,648,718],[822,147,854,714],[844,146,878,714],[871,263,908,712],[909,258,941,714],[1149,263,1185,714],[1287,237,1335,716],[1328,241,1400,718]].forEach(function (b) {
    el(o, 'rect', { x: b[0] + 3.5, y: b[1] + 3.5, width: b[2] - b[0] - 7, height: b[3] - b[1] - 7 });
  });
})();
```
